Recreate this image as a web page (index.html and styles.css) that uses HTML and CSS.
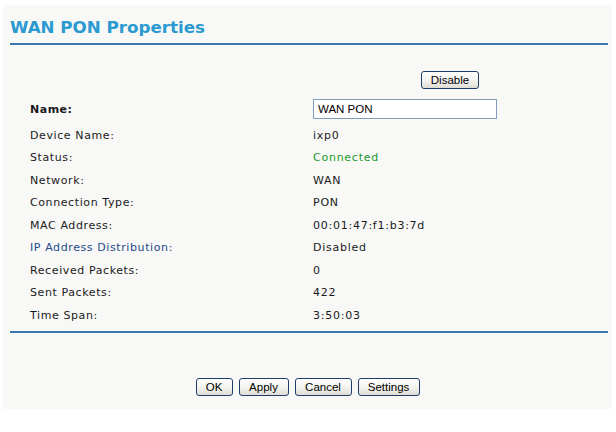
FILE: index.html
```html
<!DOCTYPE html>
<html>
<head>
<meta charset="utf-8">
<link rel="stylesheet" href="styles.css">
</head>
<body>
<div class="panel">
  <div class="header"><h1 class="title">WAN PON Properties</h1></div>
  <div class="content">
    <div class="toolbar"><button class="btn btn-disable">Disable</button></div>
    <div class="rows">
      <div class="row row-name"><span class="label bold">Name:</span><span class="value"><input class="field" type="text" value="WAN PON"></span></div>
      <div class="row"><span class="label">Device Name:</span><span class="value">ixp0</span></div>
      <div class="row"><span class="label">Status:</span><span class="value green">Connected</span></div>
      <div class="row"><span class="label">Network:</span><span class="value">WAN</span></div>
      <div class="row"><span class="label">Connection Type:</span><span class="value">PON</span></div>
      <div class="row"><span class="label">MAC Address:</span><span class="value">00:01:47:f1:b3:7d</span></div>
      <div class="row"><span class="label link">IP Address Distribution:</span><span class="value">Disabled</span></div>
      <div class="row"><span class="label">Received Packets:</span><span class="value">0</span></div>
      <div class="row"><span class="label">Sent Packets:</span><span class="value">422</span></div>
      <div class="row"><span class="label">Time Span:</span><span class="value">3:50:03</span></div>
    </div>
  </div>
  <div class="footer">
    <button class="btn btn-ok">OK</button>
    <button class="btn btn-apply">Apply</button>
    <button class="btn btn-cancel">Cancel</button>
    <button class="btn btn-settings">Settings</button>
  </div>
</div>
</body>
</html>
```
FILE: styles.css
```css
html, body { margin: 0; padding: 0; background: #ffffff; }
body { padding: 5px 4px 0 3px; font-family: "DejaVu Sans", Verdana, sans-serif; font-size: 11px; color: #1a1a1a; }
.panel { background: #f8f8f7; height: 404px; padding: 0 4px 0 7px; display: flex; flex-direction: column; }
.header { padding-top: 12px; padding-bottom: 6px; border-bottom: 2px solid #3b78ad; }
.title { margin: 0; font-family: "DejaVu Sans", Verdana, sans-serif; font-weight: bold; font-size: 16.7px; line-height: 20px; color: #2a9ad0; }
.content { padding: 26px 0 4px 20px; border-bottom: 2px solid #3b78ad; }
.toolbar { height: 18px; padding-left: 391px; margin-bottom: 9px; }
.rows { display: flex; flex-direction: column; }
.row { display: flex; align-items: center; height: 22.5px; letter-spacing: 0.6px; }
.row-name { height: 22px; margin-bottom: 4px; }
.label { width: 283px; flex: none; }
.value { letter-spacing: 0.75px; }
.bold { font-weight: bold; letter-spacing: 0.5px; }
.link { color: #254a8a; }
.green { color: #22982c; }
.field { box-sizing: border-box; width: 184px; height: 20px; border: 1px solid #7f9db9; background: #fff; font-family: "Liberation Sans", Arial, sans-serif; font-size: 11.5px; padding: 0 4px; margin: 0; color: #000; letter-spacing: 0; }
.btn { box-sizing: border-box; height: 18px; border: 1px solid #1f3d6a; border-radius: 3px; background: linear-gradient(#ffffff, #f1f1ec 60%, #dedcd3); font-family: "Liberation Sans", Arial, sans-serif; font-size: 11.5px; color: #000; padding: 0; margin: 0; line-height: 16px; }
.btn-disable { width: 58px; }
.footer { display: flex; justify-content: center; gap: 6px; padding-top: 45px; padding-right: 3px; }
.btn-ok { width: 37px; }
.btn-apply { width: 50px; }
.btn-cancel { width: 57px; }
.btn-settings { width: 62px; }
```
